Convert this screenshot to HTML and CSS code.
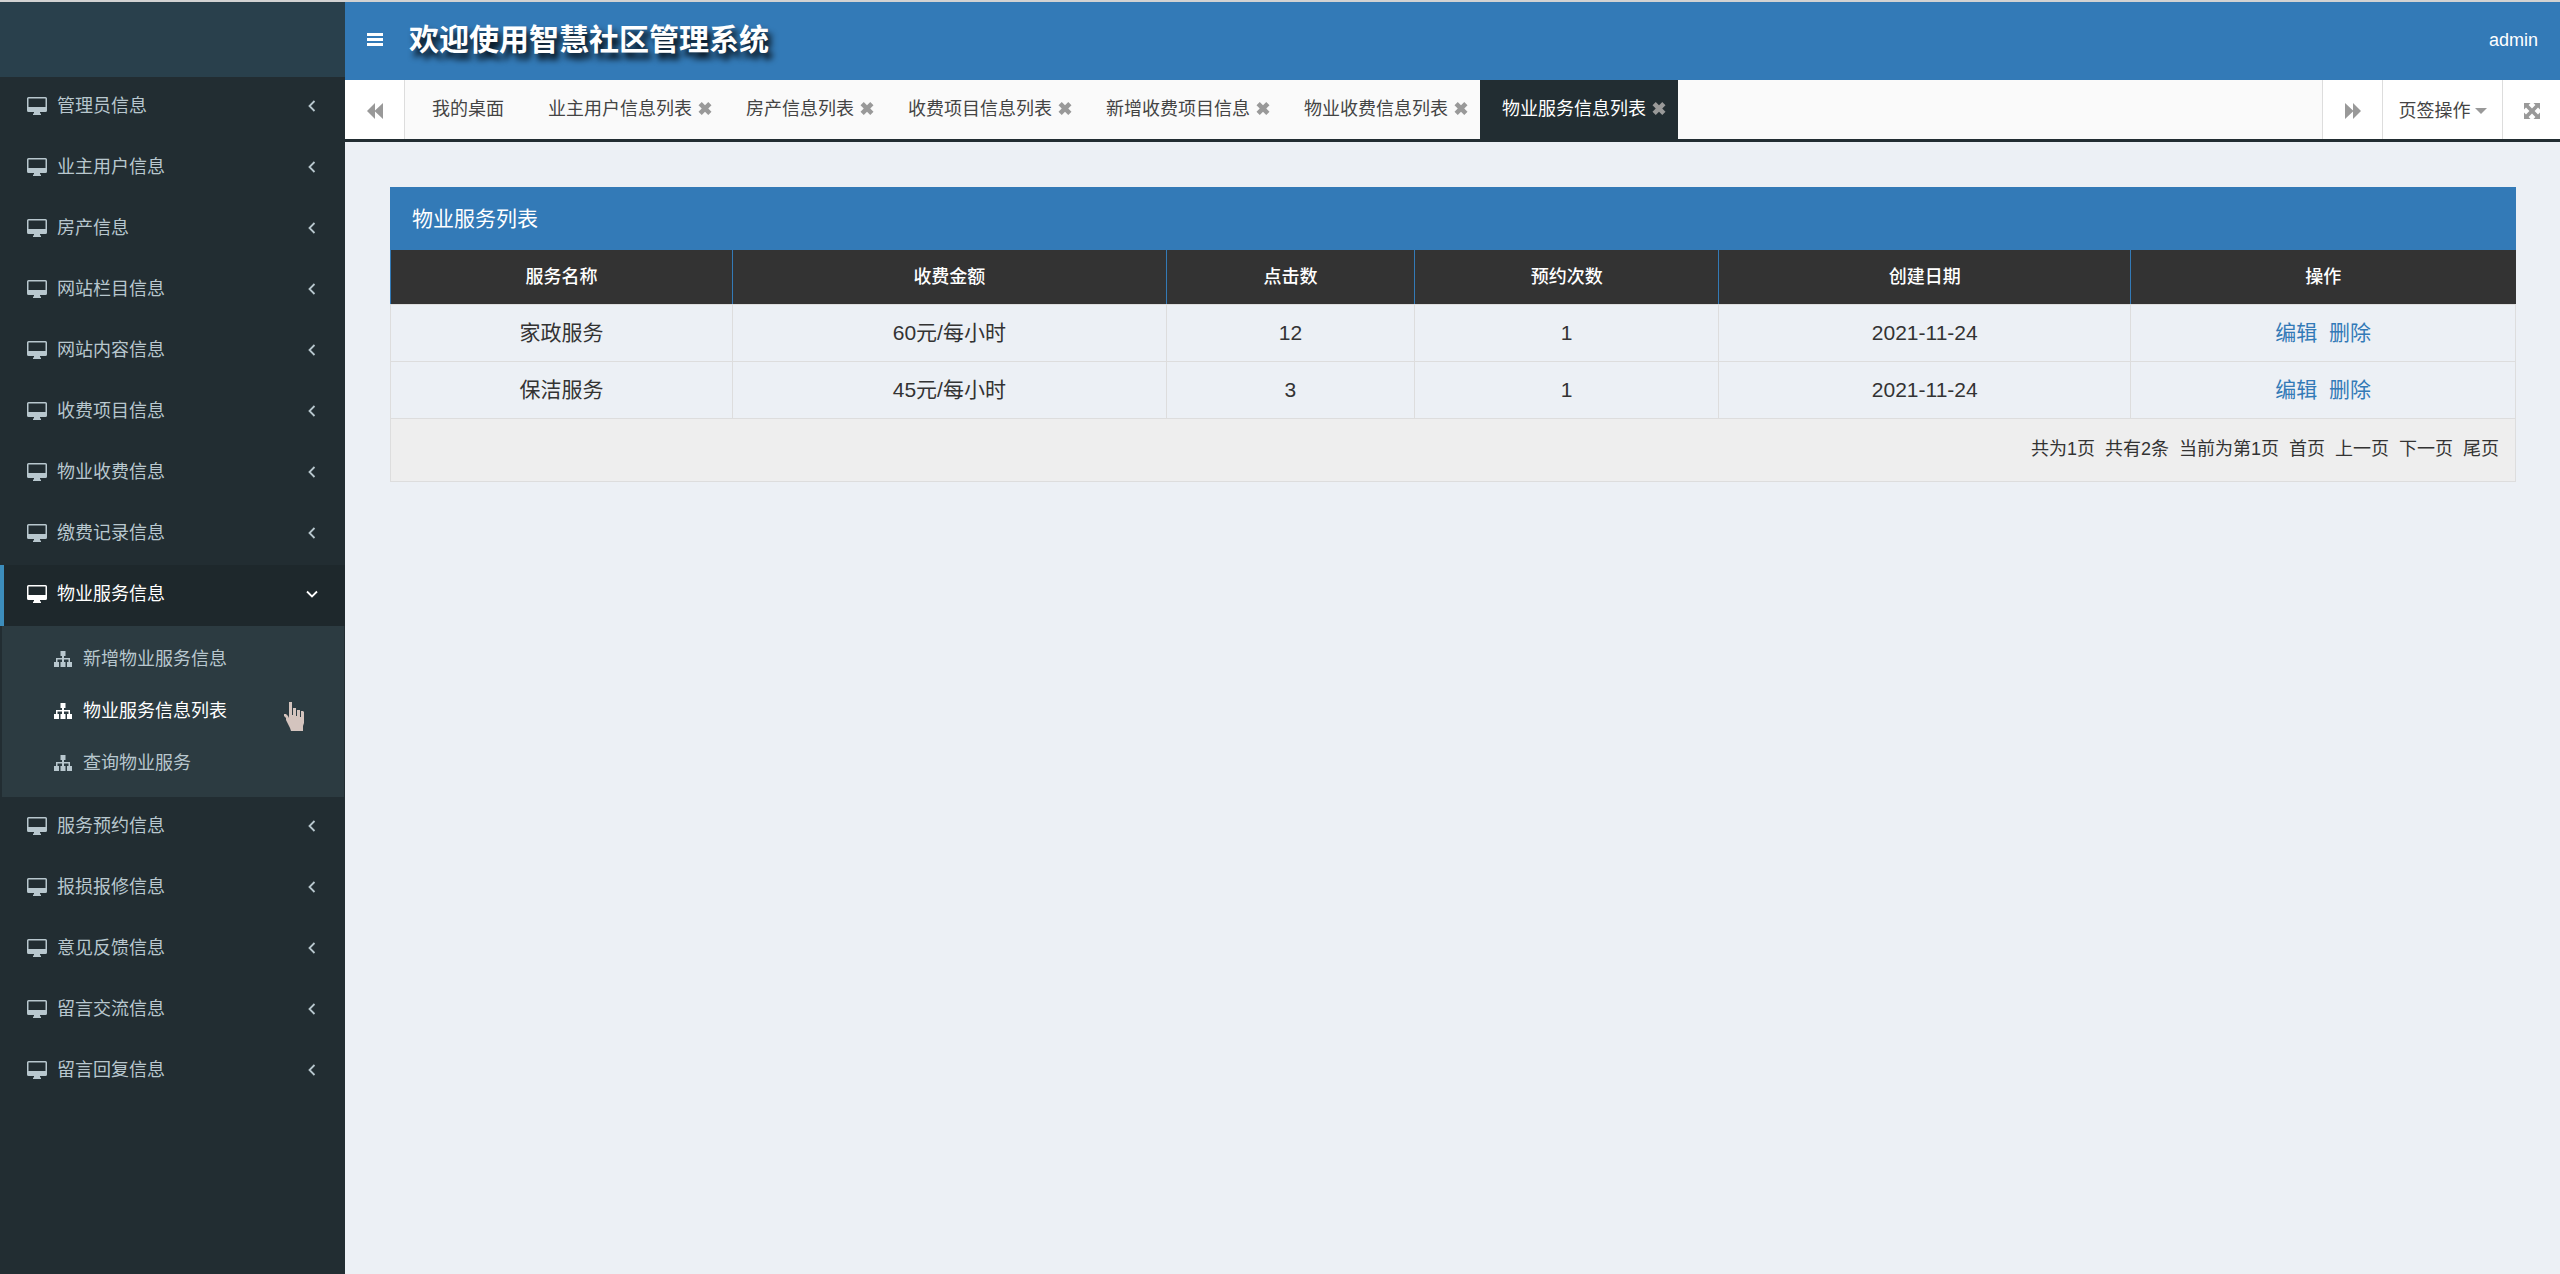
FILE: index.html
```html
<!DOCTYPE html>
<html lang="zh-CN">
<head>
<meta charset="utf-8">
<meta name="viewport" content="width=device-width, initial-scale=1">
<title>智慧社区管理系统</title>
<link rel="stylesheet" href="styles.css">
</head>
<body>
<svg class="sprite" aria-hidden="true">
  <symbol id="desktop" viewBox="0 0 20 18"><path fill-rule="evenodd" d="M1.500 0h17a1.500 1.500 0 0 1 1.500 1.500v12a1.500 1.500 0 0 1-1.500 1.500H13v1.500h1V18H6v-1.500h1V15H1.500A1.500 1.500 0 0 1 0 13.500V1.500A1.500 1.500 0 0 1 1.500 0zM1.500 1.500V10h17V1.500z"/></symbol>
  <symbol id="sitemap" viewBox="0 0 18 16"><path d="M6.500 0h5v5H10v2h6v4h2v5h-5v-5h1.500V8.500H10V11h1.500v5h-5v-5H8V8.500H3.500V11H5v5H0v-5h2V7h6V5H6.500z"/></symbol>
  <symbol id="left" viewBox="0 0 8 12"><path d="M6.500 1 1.500 6l5 5" fill="none" stroke="currentColor" stroke-width="1.800"/></symbol>
  <symbol id="down" viewBox="0 0 12 8"><path d="M1 1.500l5 5 5-5" fill="none" stroke="currentColor" stroke-width="1.800"/></symbol>
  <symbol id="close" viewBox="0 0 14 14"><path d="M3.500 0 7 3.500 10.500 0 14 3.500 10.500 7l3.500 3.500-3.500 3.500L7 10.500 3.500 14 0 10.500 3.500 7 0 3.500z"/></symbol>
  <symbol id="back" viewBox="0 0 16 16"><path d="M8 0v7.500L16 0v16L8 8.500V16L0 8z"/></symbol>
  <symbol id="forward" viewBox="0 0 16 16"><path d="M8 0v7.500L0 0v16l8-7.500V16l8-8z"/></symbol>
  <symbol id="expand" viewBox="0 0 16 16"><path d="M0 0h6.500L4.600 2 8 5.400 11.400 2 9.500 0H16v6.500L14 4.600 10.600 8l3.400 3.400 2-1.900V16H9.500l1.900-2L8 10.600 4.600 14l1.900 2H0V9.500l2 1.900L5.400 8 2 4.600 0 6.500z"/></symbol>
</svg>

<aside class="sidebar">
  <div class="brand"></div>
  <nav>
    <ul class="menu">
      <li><a class="item" href="#"><svg class="ico"><use href="#desktop"/></svg><span>管理员信息</span><svg class="chev"><use href="#left"/></svg></a></li>
      <li><a class="item" href="#"><svg class="ico"><use href="#desktop"/></svg><span>业主用户信息</span><svg class="chev"><use href="#left"/></svg></a></li>
      <li><a class="item" href="#"><svg class="ico"><use href="#desktop"/></svg><span>房产信息</span><svg class="chev"><use href="#left"/></svg></a></li>
      <li><a class="item" href="#"><svg class="ico"><use href="#desktop"/></svg><span>网站栏目信息</span><svg class="chev"><use href="#left"/></svg></a></li>
      <li><a class="item" href="#"><svg class="ico"><use href="#desktop"/></svg><span>网站内容信息</span><svg class="chev"><use href="#left"/></svg></a></li>
      <li><a class="item" href="#"><svg class="ico"><use href="#desktop"/></svg><span>收费项目信息</span><svg class="chev"><use href="#left"/></svg></a></li>
      <li><a class="item" href="#"><svg class="ico"><use href="#desktop"/></svg><span>物业收费信息</span><svg class="chev"><use href="#left"/></svg></a></li>
      <li><a class="item" href="#"><svg class="ico"><use href="#desktop"/></svg><span>缴费记录信息</span><svg class="chev"><use href="#left"/></svg></a></li>
      <li>
        <a class="item open" href="#"><svg class="ico"><use href="#desktop"/></svg><span>物业服务信息</span><svg class="chev"><use href="#down"/></svg></a>
        <ul class="submenu">
          <li><a class="subitem" href="#"><svg class="tree"><use href="#sitemap"/></svg><span>新增物业服务信息</span></a></li>
          <li class="hovered"><a class="subitem current" href="#"><svg class="tree"><use href="#sitemap"/></svg><span>物业服务信息列表</span></a>
            <svg class="pointer" viewBox="0 0 20 29" aria-hidden="true"><path d="M5 0h3v13h1V6h3v8h1V8h3v7h1V9h2l1 1v11l-1 3v5H7l-1-3-2-4-2-4v-2L0 14v-2h2l2 2 1 2z"/></svg>
          </li>
          <li><a class="subitem" href="#"><svg class="tree"><use href="#sitemap"/></svg><span>查询物业服务</span></a></li>
        </ul>
      </li>
      <li><a class="item" href="#"><svg class="ico"><use href="#desktop"/></svg><span>服务预约信息</span><svg class="chev"><use href="#left"/></svg></a></li>
      <li><a class="item" href="#"><svg class="ico"><use href="#desktop"/></svg><span>报损报修信息</span><svg class="chev"><use href="#left"/></svg></a></li>
      <li><a class="item" href="#"><svg class="ico"><use href="#desktop"/></svg><span>意见反馈信息</span><svg class="chev"><use href="#left"/></svg></a></li>
      <li><a class="item" href="#"><svg class="ico"><use href="#desktop"/></svg><span>留言交流信息</span><svg class="chev"><use href="#left"/></svg></a></li>
      <li><a class="item" href="#"><svg class="ico"><use href="#desktop"/></svg><span>留言回复信息</span><svg class="chev"><use href="#left"/></svg></a></li>
    </ul>
  </nav>
</aside>

<div class="page">
  <header class="topbar">
    <button class="toggle" type="button" aria-label="切换菜单"><svg viewBox="0 0 16 14"><path d="M0 0h16v3H0zM0 5h16v3H0zM0 10h16v3H0z"/></svg></button>
    <h1>欢迎使用智慧社区管理系统</h1>
    <a class="user" href="#">admin</a>
  </header>

  <div class="tabbar">
    <button class="tool prev" type="button" aria-label="向左"><svg><use href="#back"/></svg></button>
    <nav class="tabs">
      <a class="tab" href="#">我的桌面</a>
      <a class="tab" href="#">业主用户信息列表<svg><use href="#close"/></svg></a>
      <a class="tab" href="#">房产信息列表<svg><use href="#close"/></svg></a>
      <a class="tab" href="#">收费项目信息列表<svg><use href="#close"/></svg></a>
      <a class="tab" href="#">新增收费项目信息<svg><use href="#close"/></svg></a>
      <a class="tab" href="#">物业收费信息列表<svg><use href="#close"/></svg></a>
      <a class="tab active" href="#">物业服务信息列表<svg><use href="#close"/></svg></a>
    </nav>
    <button class="tool" type="button" aria-label="向右"><svg><use href="#forward"/></svg></button>
    <button class="tool ops" type="button">页签操作<i class="caret"></i></button>
    <button class="tool full" type="button" aria-label="全屏"><svg><use href="#expand"/></svg></button>
  </div>

  <main>
    <section class="panel">
      <h2>物业服务列表</h2>
      <table>
        <colgroup><col class="c-name"><col class="c-fee"><col class="c-hits"><col class="c-times"><col class="c-date"><col class="c-act"></colgroup>
        <thead>
          <tr><th>服务名称</th><th>收费金额</th><th>点击数</th><th>预约次数</th><th>创建日期</th><th>操作</th></tr>
        </thead>
        <tbody>
          <tr><td>家政服务</td><td>60元/每小时</td><td>12</td><td>1</td><td>2021-11-24</td><td><a href="#">编辑</a>&nbsp; <a href="#">删除</a></td></tr>
          <tr><td>保洁服务</td><td>45元/每小时</td><td>3</td><td>1</td><td>2021-11-24</td><td><a href="#">编辑</a>&nbsp; <a href="#">删除</a></td></tr>
        </tbody>
        <tfoot>
          <tr><td colspan="6"><div class="pager"><span>共为1页</span><span>共有2条</span><span>当前为第1页</span><a href="#">首页</a><a href="#">上一页</a><a href="#">下一页</a><a href="#">尾页</a></div></td></tr>
        </tfoot>
      </table>
    </section>
  </main>
</div>
</body>
</html>
```
FILE: styles.css
```css
* { box-sizing: border-box; }

body {
  margin: 0;
  min-height: 100vh;
  display: flex;
  border-top: 2px solid #d2d2d2;
  background: #ecf0f5;
  color: #333;
  font: 18px/26px "Liberation Sans", "Noto Sans CJK SC", sans-serif;
}

a { color: inherit; text-decoration: none; }
ul { list-style: none; margin: 0; padding: 0; }
button { border: 0; background: none; padding: 0; color: inherit; font: inherit; cursor: pointer; }
svg { fill: currentColor; flex: none; }
.sprite { display: none; }

/* Sidebar */
.sidebar { flex: 0 0 345px; background: #222d32; color: #b8c7ce; }
.brand { height: 75px; background: #29404c; }
.item {
  display: flex;
  align-items: center;
  gap: 10px;
  height: 61px;
  padding: 0 27px 3px 23px;
  border-left: 4px solid transparent;
}
.item .ico { width: 20px; height: 18px; }
.item .chev { width: 12px; height: 12px; margin-left: auto; }
.item.open { background: #1e282c; border-left-color: #3c8dbc; color: #fff; }
.submenu { margin: 0 1px 0 2px; padding: 7px 0 8px; background: #2c3b41; }
.subitem { display: flex; align-items: center; gap: 11px; height: 52px; padding-left: 52px; }
.subitem .tree { width: 18px; height: 16px; }
.subitem.current { color: #fff; }
.hovered { position: relative; }
.pointer { position: absolute; left: 282px; top: 17px; width: 20px; height: 29px; fill: #d4c4be; }

/* Header */
.page { flex: 1; min-width: 0; }
.topbar {
  display: flex;
  align-items: center;
  height: 78px;
  padding: 0 22px 2px;
  background: #337ab7;
  color: #fff;
}
.toggle { width: 16px; height: 20px; margin-right: 26px; }
.toggle svg { display: block; width: 16px; height: 14px; }
h1 {
  margin: 0;
  font-size: 30px;
  line-height: 40px;
  text-shadow: 4px 6px 6px #000;
}
.user { margin-left: auto; }

/* Tabs */
.tabbar {
  display: flex;
  height: 62px;
  border-bottom: 3px solid #222d32;
  background: #fafafa;
  color: #444;
}
.tabs { flex: 1; min-width: 0; display: flex; padding-left: 5px; overflow: hidden; }
.tab {
  display: flex;
  align-items: center;
  gap: 6px;
  flex: none;
  padding: 0 12px 2px 22px;
}
.tab:first-child { padding-right: 22px; }
.tab svg { width: 14px; height: 13px; color: #999; }
.tab.active { background: #222d32; color: #fff; }
.tool {
  display: flex;
  align-items: center;
  justify-content: center;
  flex: 0 0 60px;
  padding-top: 2px;
  border-left: 1px solid #ddd;
  background: #fff;
}
.tool svg { width: 16px; height: 16px; color: #999; }
.tool.prev { border-left: 0; border-right: 1px solid #ddd; }
.tool.ops { flex-basis: 120px; gap: 4px; }
.tool.full { flex-basis: 58px; }
.caret { border: 6px solid transparent; border-top-color: #999; border-bottom: 0; }

/* Listing */
main { padding: 45px 44px 45px 45px; }
.panel h2 {
  margin: 0;
  padding: 17px 22px 16px;
  background: #337ab7;
  color: #fff;
  font-size: 21px;
  line-height: 30px;
  font-weight: 400;
}
table { width: 100%; border-collapse: collapse; table-layout: fixed; }
.c-name { width: 16.1%; }
.c-fee { width: 20.4%; }
.c-hits { width: 11.7%; }
.c-times { width: 14.3%; }
.c-date { width: 19.4%; }
.c-act { width: 18.1%; }
th {
  height: 54px;
  padding: 0;
  border: 1px solid #337ab7;
  border-top: 0;
  border-bottom-color: #ddd;
  background: #333;
  color: #fff;
  font-weight: 500;
}
th:last-child { border-right-color: #333; }
td { height: 57px; padding: 0; border: 1px solid #ddd; text-align: center; font-size: 21px; line-height: 30px; }
td a { color: #337ab7; }
tfoot td { height: 63px; padding: 0 16px 2px; background: #eee; font-size: 18px; }
.pager { display: flex; justify-content: flex-end; gap: 10px; }
.pager a { color: inherit; }
```
